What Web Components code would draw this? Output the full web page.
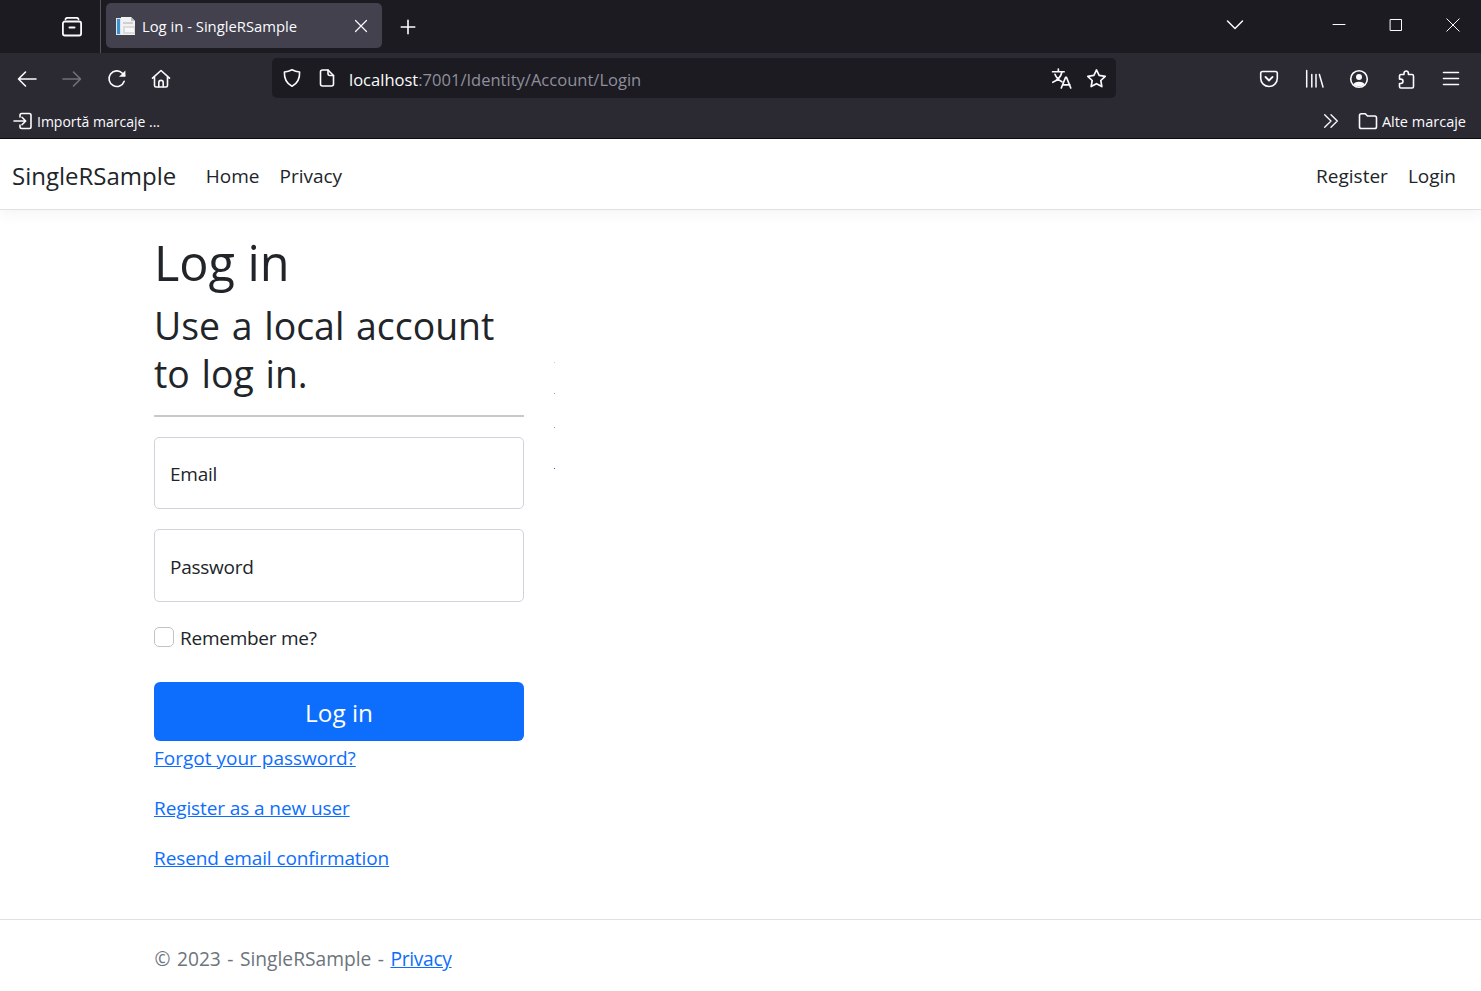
<!DOCTYPE html>
<html lang="ro">
<head>
<meta charset="utf-8">
<title>Log in - SingleRSample</title>
<style>
  html, body { margin: 0; padding: 0; background: #fff; }
  body { font-family: "Open Sans", "Liberation Sans", sans-serif; overflow: hidden; height: 991px; display: flex; flex-direction: column; }
</style>
</head>
<body>
<browser-chrome></browser-chrome>
<app-navbar></app-navbar>
<login-page></login-page>
<app-footer></app-footer>

<script>
const ICONS = {
  view: `<path d="M3.5 2.2C4 1.200 4.500.8 5.500.8h9c1 0 1.500.4 2 1.400"/><rect x=".9" y="4.500" width="18.200" height="14" rx="2"/><path d="M7.500 10.500h5" stroke-width="2"/>`,
  close: `<path d="M4.500 4.500l11 11M15.500 4.500l-11 11"/>`,
  plus: `<path d="M10 2.500v15M2.500 10h15"/>`,
  chevron: `<path d="M2.500 6l7.500 7.500L17.500 6"/>`,
  min: `<path d="M4 9.500h12"/>`,
  max: `<rect x="4.500" y="4.500" width="11" height="11"/>`,
  winclose: `<path d="M3.800 3.800l12.400 12.400M16.200 3.800L3.800 16.200"/>`,
  back: `<path d="M19 10H1.500M8.500 3l-7 7 7 7"/>`,
  forward: `<path d="M1 10h17.500M11.500 3l7 7-7 7"/>`,
  reload: `<path d="M17.200 12.200A7.800 7.800 0 1 1 15.400 4.200L17.600 6.400"/><path d="M18.400 1.400v6.400H12z" fill="currentColor" stroke="none"/>`,
  home: `<path d="M1.500 9.200L10 1.500l8.500 7.700M3.500 7.600v8.800c0 1 .6 1.600 1.600 1.600h9.800c1 0 1.600-.6 1.600-1.600V7.600"/><path d="M7.800 17.800v-4.300c0-1.200 1-2.100 2.200-2.100s2.200.9 2.200 2.100v4.300"/>`,
  shield: `<path d="M10 1.800c2.500 1.400 4.800 2 7.600 2.200.3 6.500-1.900 11.400-7.600 14.200C4.300 15.400 2.100 10.500 2.400 4 5.200 3.800 7.500 3.200 10 1.800z"/>`,
  page: `<path d="M5.500 2h5.500l5.500 5.500v8.500c0 1.200-.8 2-2 2H5.500c-1.200 0-2-.8-2-2V4c0-1.200.8-2 2-2z"/><path d="M11 2v3.500c0 1.200.8 2 2 2h3.500"/>`,
  translate: `<path d="M1.500 3.600h11M7 1v2.600M10.500 3.600c-1 4.600-4.200 8-8.800 10M3.800 6c1.300 3.400 3.600 5.800 6.600 7.200"/><path d="M9.800 19l4-10h1l4 10M11.200 16h6.800"/>`,
  star: `<path d="M10 1.800l2.500 5.300 5.800.8-4.200 4 1 5.800-5.100-2.800-5.100 2.800 1-5.800-4.200-4 5.800-.8z"/>`,
  pocket: `<path d="M3.500 2.500h13c1 0 1.800.8 1.800 1.800v5c0 4.600-3.700 8.200-8.300 8.200s-8.300-3.600-8.300-8.200v-5c0-1 .8-1.800 1.800-1.800z"/><path d="M6.500 8l3.500 3.500L13.500 8" stroke-width="1.800"/>`,
  library: `<path d="M2.700 1.500V18M7.800 5.500V18M12 5.500V18M15.400 5.500L19 18"/>`,
  account: `<circle cx="10" cy="10" r="8.300"/><circle cx="10" cy="8" r="3" fill="currentColor" stroke="none"/><path d="M4.500 15.500c.6-2 2.300-2.800 5.500-2.800s4.900.8 5.500 2.800c-1.500 1.300-3.400 2-5.500 2s-4-.7-5.500-2z" fill="currentColor" stroke="none"/>`,
  extensions: `<path d="M8 5.500V4.200a2.200 2.200 0 1 1 4.400 0v1.300h3.700c.9 0 1.400.5 1.400 1.400v10.700c0 .9-.5 1.400-1.400 1.400H4.900c-.9 0-1.400-.5-1.400-1.400v-3.100h1.300a2.200 2.200 0 1 0 0-4.400H3.500V6.900c0-.9.500-1.400 1.400-1.400z"/>`,
  menu: `<path d="M2.500 3.500h15M2.500 9.500h15M2.500 15.500h15"/>`,
  overflow: `<path d="M3 3l7 7-7 7M10 3l7 7-7 7"/>`,
  folder: `<path d="M1.500 4.500c0-1.100.7-1.800 1.800-1.800h4l2.200 2.300h7.200c1.100 0 1.800.7 1.800 1.800v8.900c0 1.100-.7 1.800-1.800 1.800H3.300c-1.100 0-1.800-.7-1.800-1.800z"/>`,
  import: `<path d="M7 6V4.200c0-1 .7-1.700 1.700-1.700h7.600c1 0 1.700.7 1.700 1.700v11.600c0 1-.7 1.700-1.700 1.700H8.700c-1 0-1.700-.7-1.700-1.700V14"/><path d="M1 10h11M9 6.300L12.700 10 9 13.700"/>`
};

class UiIcon extends HTMLElement {
  connectedCallback() {
    const size = this.getAttribute("size") || 20;
    this.attachShadow({ mode: "open" }).innerHTML = `
      <style>
        :host { display: inline-flex; width: ${size}px; height: ${size}px; color: inherit; flex: none; }
        svg { width: 100%; height: 100%; display: block; fill: none; stroke: currentColor; stroke-width: ${this.getAttribute("stroke") || 1.6}; stroke-linecap: round; stroke-linejoin: round; }
      </style>
      <svg viewBox="0 0 20 20">${ICONS[this.getAttribute("name")] || ""}</svg>`;
  }
}
customElements.define("ui-icon", UiIcon);

class BrowserChrome extends HTMLElement {
  connectedCallback() {
    this.attachShadow({ mode: "open" }).innerHTML = `
      <style>
        :host { display: block; height: 139px; color: #fbfbfe; font-size: 14px; flex: none; border-bottom: 1px solid #0c0c0d; box-sizing: border-box; background: #2b2a33; }
        .tabs { height: 53px; background: #1c1b22; display: flex; align-items: flex-start; }
        .view { width: 101px; height: 53px; display: flex; align-items: center; justify-content: flex-end; padding-right: 18px; box-sizing: border-box; border-right: 1px solid #55545c; margin-right: 5px; }
        .tab { width: 276px; height: 45px; margin-top: 3px; background: #42414d; border-radius: 5px; display: flex; align-items: center; padding: 0 11px 0 10px; box-sizing: border-box; }
        .tab svg { flex: none; margin-right: 6px; }
        .title { flex: 1; white-space: nowrap; font-size: 14.800px; padding-top: 1px; }
        .plus { width: 52px; height: 53px; display: flex; align-items: center; justify-content: center; }
        .space { flex: 1; }
        .ctl { height: 50px; display: flex; align-items: center; justify-content: center; width: 57px; }
        .nav { height: 51px; display: flex; align-items: center; padding: 0 0 0 4px; }
        .btn { width: 45px; height: 45px; display: flex; align-items: center; justify-content: center; flex: none; }
        .dim { color: #72717a; }
        .url { flex: none; width: 844px; height: 40px; margin: 0 130px 0 88px; background: #1c1b22; border-radius: 5px; display: flex; align-items: center; padding: 0 2.500px; box-sizing: border-box; position: relative; top: -.5px; }
        .url .lead { width: 35px; display: flex; justify-content: center; }
        .addr { flex: 1; margin-left: 4.500px; font-size: 16.550px; white-space: nowrap; color: #8f8f9d; padding-top: 2px; }
        .addr b { font-weight: 400; color: #fbfbfe; }
        .url .trail { width: 35px; display: flex; justify-content: center; }
        .marks { height: 34px; display: flex; align-items: center; padding: 0 15px 0 13px; }
        .marks span { white-space: nowrap; }
        .grow { flex: 1; }
      </style>
      <div class="tabs">
        <div class="view"><ui-icon name="view" stroke="1.800"></ui-icon></div>
        <div class="tab">
          <svg width="20" height="20" viewBox="0 0 20 20">
            <rect x="0" y="2" width="5" height="17" fill="#d8e6f2"/><rect x="1" y="3" width="3" height="15" fill="#3f8fd0"/>
            <path d="M5 1h10l4 4v14H5z" fill="#f2f2f2"/><path d="M15 1v4h4z" fill="#bdbdbd"/>
            <rect x="7" y="6" width="10" height="2" fill="#cfcfcf"/><rect x="7" y="10" width="12" height="8" fill="#dcdcdc"/><rect x="9" y="12" width="9" height="4" fill="#f8f8f8"/>
          </svg>
          <span class="title">Log in - SingleRSample</span>
          <ui-icon name="close" stroke="1.200"></ui-icon>
        </div>
        <div class="plus"><ui-icon name="plus" size="18" stroke="1.800"></ui-icon></div>
        <div class="space"></div>
        <div class="ctl" style="width:72px;margin-right:39px"><ui-icon name="chevron" stroke="1.500"></ui-icon></div>
        <div class="ctl"><ui-icon name="min" stroke="1"></ui-icon></div>
        <div class="ctl"><ui-icon name="max" stroke="1"></ui-icon></div>
        <div class="ctl"><ui-icon name="winclose" stroke="1"></ui-icon></div>
      </div>
      <div class="nav">
        <div class="btn"><ui-icon name="back"></ui-icon></div>
        <div class="btn dim"><ui-icon name="forward"></ui-icon></div>
        <div class="btn"><ui-icon name="reload"></ui-icon></div>
        <div class="btn" style="margin:0 1px 0 -1px"><ui-icon name="home"></ui-icon></div>
        <div class="url">
          <div class="lead"><ui-icon name="shield"></ui-icon></div>
          <div class="lead"><ui-icon name="page"></ui-icon></div>
          <div class="addr"><b>localhost</b>:7001/Identity/Account/Login</div>
          <div class="trail"><ui-icon name="translate" size="21"></ui-icon></div>
          <div class="trail"><ui-icon name="star" size="21"></ui-icon></div>
        </div>
        <div class="btn"><ui-icon name="pocket"></ui-icon></div>
        <div class="btn"><ui-icon name="library" stroke="1.500"></ui-icon></div>
        <div class="btn"><ui-icon name="account"></ui-icon></div>
        <div class="btn" style="margin-left:2px"><ui-icon name="extensions"></ui-icon></div>
        <div class="btn"><ui-icon name="menu"></ui-icon></div>
      </div>
      <div class="marks">
        <ui-icon name="import"></ui-icon>
        <span style="margin-left:4px">Importă marcaje ...</span>
        <div class="grow"></div>
        <ui-icon name="overflow" size="18" stroke="1.500"></ui-icon>
        <ui-icon name="folder" style="margin-left:18px"></ui-icon>
        <span style="margin-left:4px;font-size:14.500px">Alte marcaje</span>
      </div>`;
  }
}
customElements.define("browser-chrome", BrowserChrome);

class AppNavbar extends HTMLElement {
  connectedCallback() {
    this.attachShadow({ mode: "open" }).innerHTML = `
      <style>
        :host { display: flex; flex: none; height: 71px; box-sizing: border-box; align-items: center; background: #fff; border-bottom: 1px solid #dee2e6; box-shadow: 0 3px 15px rgba(0,0,0,.05); padding: 4px 15px 0 12px; color: #212529; font-size: 19px; position: relative; }
        .brand { font-size: 24px; margin-right: 19.500px; white-space: nowrap; padding-bottom: 2px; }
        a { color: inherit; text-decoration: none; padding: 0 10px; white-space: nowrap; }
        .grow { flex: 1; }
      </style>
      <span class="brand">SingleRSample</span>
      <a>Home</a><a>Privacy</a>
      <div class="grow"></div>
      <a>Register</a><a>Login</a>`;
  }
}
customElements.define("app-navbar", AppNavbar);

class FloatingInput extends HTMLElement {
  connectedCallback() {
    this.attachShadow({ mode: "open" }).innerHTML = `
      <style>
        :host { display: block; position: relative; }
        input { display: block; width: 100%; height: 100%; box-sizing: border-box; border: 1px solid #ced4da; border-radius: 5px; background: #fff; padding: 0; margin: 0; outline: none; }
        label { position: absolute; left: 16px; top: 0; bottom: 0; display: flex; align-items: center; color: #212529; padding-top: 2px; letter-spacing: -.25px; }
      </style>
      <input type="${this.getAttribute("type") || "text"}" aria-label="${this.getAttribute("label")}">
      <label>${this.getAttribute("label")}</label>`;
  }
}
customElements.define("floating-input", FloatingInput);

class LoginPage extends HTMLElement {
  connectedCallback() {
    this.attachShadow({ mode: "open" }).innerHTML = `
      <style>
        :host { display: block; flex: none; padding: 22px 0 0 154px; color: #212529; font-size: 19px; line-height: 30px; position: relative; height: 709px; box-sizing: border-box; }
        .col { width: 370px; }
        h1 { font-size: 48.600px; line-height: 60px; font-weight: 400; margin: 0 0 10px; }
        h2 { font-size: 37.400px; word-spacing: 2px; line-height: 48px; font-weight: 400; margin: 0; }
        hr { border: 0; height: 2px; background: #c8c9ca; margin: 17px 0 20px; }
        floating-input { height: 72px; margin-bottom: 20px; }
        floating-input.pw { height: 73px; }
        .check { display: flex; align-items: center; height: 30px; margin: 0 0 30px; }
        .check span:last-child { letter-spacing: -.25px; padding-top: 2px; }
        .box { width: 20px; height: 20px; box-sizing: border-box; border: 1px solid #bfc4c9; border-radius: 5px; margin-right: 6px; flex: none; }
        button { display: block; width: 100%; height: 59px; background: #0d6efd; color: #fff; border: 0; border-radius: 6px; font: inherit; font-size: 24.300px; padding: 2px 0 0; margin: 0 0 2px; }
        p { margin: 0 0 20px; letter-spacing: -.1px; }
        p:first-of-type { letter-spacing: 0; }
        a { color: #0d6efd; text-decoration: underline; }
        i { position: absolute; left: 554px; width: 1px; height: 1px; }
      </style>
      <div class="col">
        <h1>Log in</h1>
        <h2>Use a local account to log in.</h2>
        <hr>
        <floating-input label="Email" type="email"></floating-input>
        <floating-input class="pw" label="Password" type="password"></floating-input>
        <div class="check"><span class="box"></span><span>Remember me?</span></div>
        <button>Log in</button>
        <p><a>Forgot your password?</a></p>
        <p><a>Register as a new user</a></p>
        <p><a>Resend email confirmation</a></p>
      </div>
      <i style="top:152px;background:#c9c9c9"></i>
      <i style="top:183px;background:#e0913c"></i>
      <i style="top:217px;background:#e0913c"></i>
      <i style="top:258px;background:#1f5fd0"></i>`;
  }
}
customElements.define("login-page", LoginPage);

class AppFooter extends HTMLElement {
  connectedCallback() {
    this.attachShadow({ mode: "open" }).innerHTML = `
      <style>
        :host { display: block; flex: none; border-top: 1px solid #dee2e6; padding: 24px 0 0 154.500px; color: #6c757d; font-size: 19.200px; word-spacing: 1.500px; line-height: 30px; }
        a { color: #0d6efd; text-decoration: underline; letter-spacing: -.3px; }
      </style>
      © 2023 - SingleRSample - <a>Privacy</a>`;
  }
}
customElements.define("app-footer", AppFooter);
</script>
</body>
</html>
